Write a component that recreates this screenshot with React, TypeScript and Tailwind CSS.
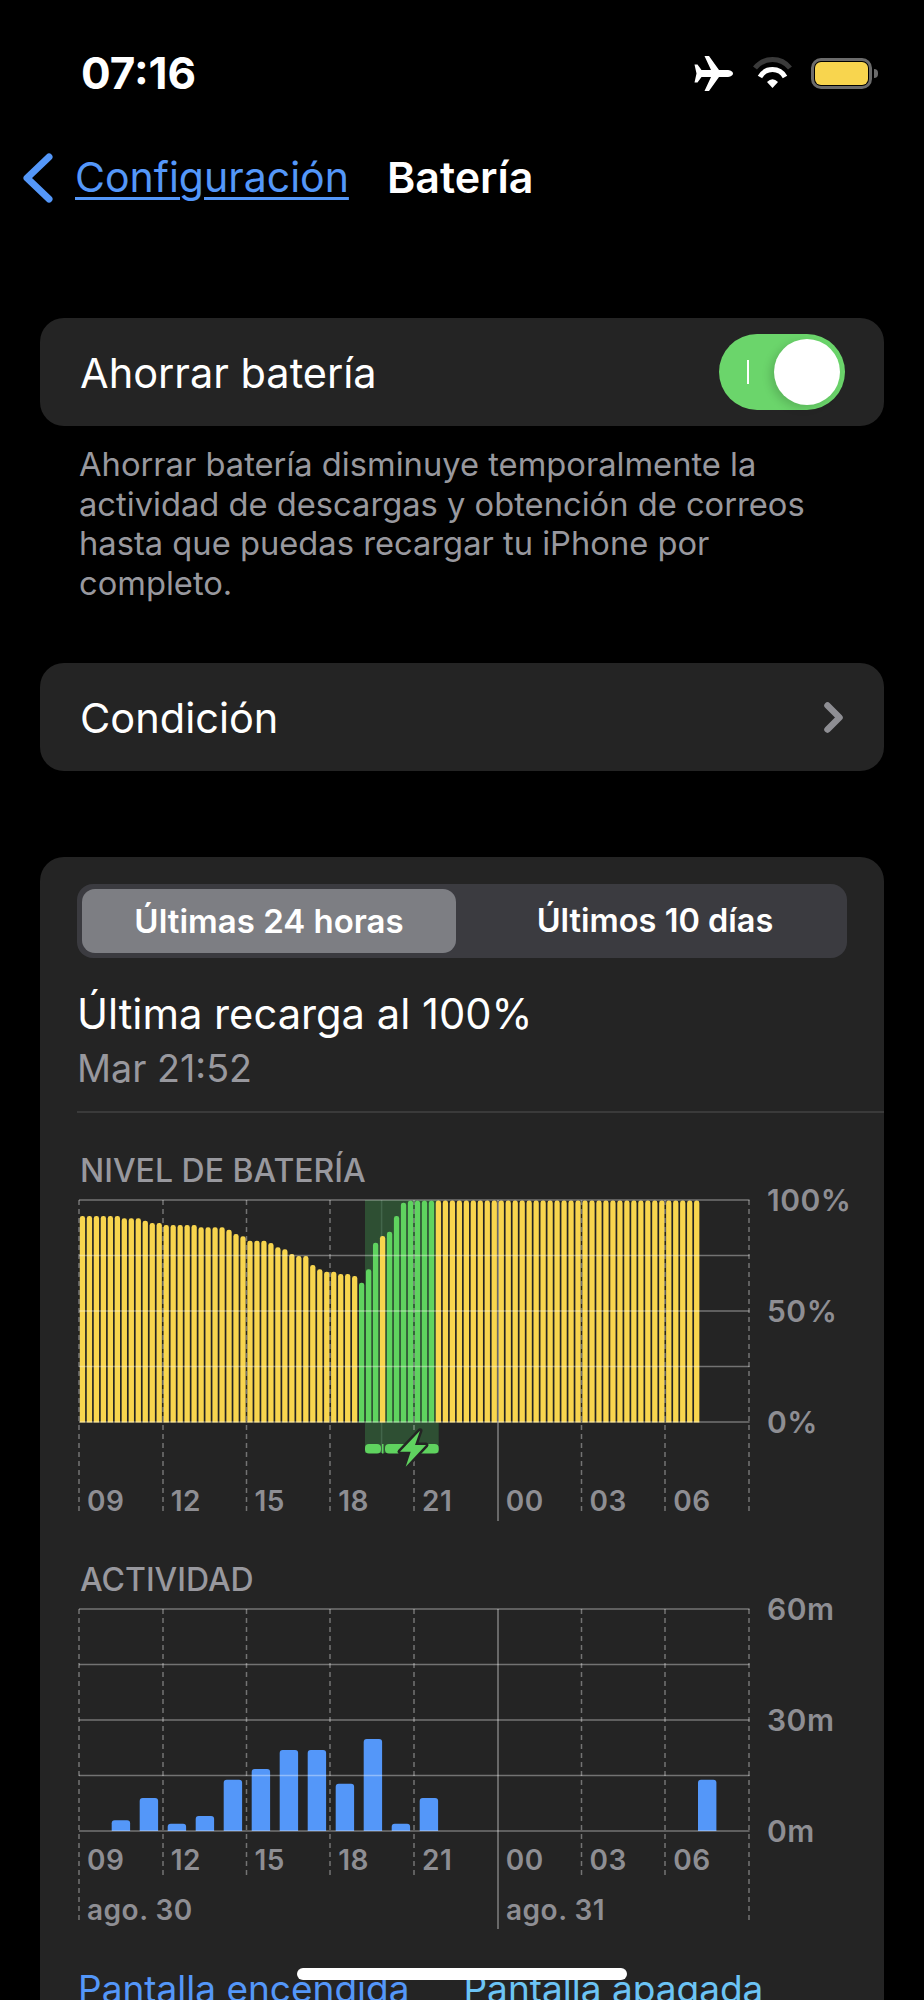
import React from "react";

const X0 = 78;
const Y0 = 1199;

// top edge of each 15 minute bar, in page pixels
const levelTops = [
  108, 108, 108, 108, 108, 108, 115, 115, 115, 122, 129, 129, 135, 135, 135, 135, 135, 142, 142, 142,
  142, 149, 162, 169, 182, 182, 182, 189, 202, 208, 222, 228, 228, 255, 268, 275, 275, 282, 282, 288,
  308, 268, 188, 168, 155, 108, 68, 62, 62, 62, 62,
].map((t) => 1180 + t / 3);

const greenBars = [40, 41, 42, 44, 45, 46, 47, 48, 49, 50];

const activity = [
  { x: 111.7, top: 1819.3 },
  { x: 139.7, top: 1797 },
  { x: 167.7, top: 1822.7 },
  { x: 195.7, top: 1815 },
  { x: 223.7, top: 1778.7 },
  { x: 251.7, top: 1768 },
  { x: 279.7, top: 1749 },
  { x: 307.7, top: 1749 },
  { x: 335.7, top: 1782.7 },
  { x: 363.7, top: 1738 },
  { x: 391.7, top: 1822.7 },
  { x: 419.7, top: 1797 },
  { x: 698, top: 1778.7 },
];

const hours = ["09", "12", "15", "18", "21", "00", "03", "06"];
const vLines = [79, 163, 246.5, 330, 414, 498, 581.5, 665, 749];

function topRounded(x: number, top: number, w: number, bottom: number, r: number) {
  return `M${x} ${bottom}V${top + r}Q${x} ${top} ${x + r} ${top}H${x + w - r}Q${x + w} ${top} ${x + w} ${top + r}V${bottom}Z`;
}

function Grid({ top, bottoms, solidEnd }: { top: number; bottoms: number[]; solidEnd: number }) {
  const rows = [0, 1, 2, 3, 4].map((i) => top + i * 55.5);
  return (
    <g fill="none" stroke="#fff" strokeOpacity="0.36" strokeWidth="1.5">
      {rows.map((y) => (
        <line key={y} x1={79 - X0} x2={749.5 - X0} y1={y - top + 1} y2={y - top + 1} />
      ))}
      {vLines.map((x, i) =>
        i === 5 ? (
          <line key={x} x1={x - X0} x2={x - X0} y1={1} y2={solidEnd} strokeOpacity="0.42" />
        ) : (
          <line key={x} x1={x - X0} x2={x - X0} y1={1} y2={bottoms[i]} strokeDasharray="5 4" />
        ),
      )}
    </g>
  );
}

function BatteryPlot() {
  const base = 1422.5;
  return (
    <svg width="672" height="323" className="block">
      <rect x={365 - X0} y={1} width="73.7" height={1453 - Y0 - 1} fill="#2e4f33" />
      <line x1={381.6 - X0} x2={381.6 - X0} y1={1} y2={1453 - Y0} stroke="#42664a" strokeWidth="1.5" />
      {Array.from({ length: 89 }).map((_, i) => {
        const top = i < levelTops.length ? levelTops[i] : 1200.6;
        const x = 79.8 + i * 6.98;
        return (
          <path
            key={i}
            d={topRounded(x - X0, top - Y0, 5.3, base - Y0, 2.4)}
            fill={greenBars.includes(i) ? "#5fd35f" : "#f8d54e"}
          />
        );
      })}
      <Grid top={Y0} bottoms={[316, 316, 316, 316, 316, 0, 316, 316, 316]} solidEnd={322} />
      <rect x={365 - X0} y={1444 - Y0} width="16" height="9.5" rx="4" fill="#5fd35f" />
      <rect x={382 - X0} y={1444 - Y0} width="1.5" height="9.5" fill="#5fd35f" />
      <rect x={385 - X0} y={1444 - Y0} width="53.7" height="9.5" rx="4" fill="#5fd35f" />
      <path
        d={`M${420 - X0} ${1430.7 - Y0}L${400 - X0} ${1451.7 - Y0}H${410.7 - X0}L${405.7 - X0} ${1466.7 - Y0}L${426 - X0} ${1445 - Y0}H${415 - X0}Z`}
        fill="#5fd35f"
        stroke="#242424"
        strokeWidth="5"
        strokeLinejoin="round"
        paintOrder="stroke"
      />
    </svg>
  );
}

function ActivityPlot() {
  const top = 1607;
  const base = 1830;
  return (
    <svg width="672" height="322" className="block">
      {activity.map((b) => (
        <path key={b.x} d={topRounded(b.x - X0, b.top - top, 18.4, base - top, 3)} fill="#5497f9" />
      ))}
      <Grid top={top} bottoms={[316, 268, 268, 268, 268, 0, 268, 268, 316]} solidEnd={321} />
    </svg>
  );
}

function Chart({
  title,
  plot,
  ticks,
  dates,
  lift,
}: {
  title: string;
  plot: React.ReactNode;
  ticks: string[];
  dates?: boolean;
  lift: string;
}) {
  return (
    <div>
      <div className="pl-[2px] text-[32px] leading-[36px] font-medium text-[#98989e]">{title}</div>
      <div className="mt-[10px] flex">
        <div className="w-[672px] h-[322px] text-[28px] leading-[36px] font-semibold tracking-[0.5px] text-[#8e8e93]">
          {plot}
          <div className={`flex pl-[1px] ${lift}`}>
            {hours.map((h) => (
              <div key={h} className="w-[83.75px] pl-[8px]">
                {h}
              </div>
            ))}
          </div>
          {dates && (
            <div className="mt-[14px] flex pl-[1px]">
              <div className="w-[419px] pl-[8px]">ago. 30</div>
              <div className="pl-[8px]">ago. 31</div>
            </div>
          )}
        </div>
        <div className="ml-[17px] -mt-[17px] flex h-[258px] flex-col justify-between text-[30px] leading-[36px] font-semibold tracking-[0.5px] text-[#8e8e93]">
          {ticks.map((t) => (
            <div key={t}>{t}</div>
          ))}
        </div>
      </div>
    </div>
  );
}

function StatusIcons() {
  return (
    <div className="flex items-center">
      <svg width="39" height="35" viewBox="0 0 39 35" fill="#fff">
        <path d="M39 17.5C39 15.5 36 14 33 14H25L15 0H10.5L17 14H7.5L3.5 8.5H.5L2.5 17.5L.5 26.5H3.5L7.5 21H17L10.5 35H15L25 21H33C36 21 39 19.5 39 17.5Z" />
      </svg>
      <svg width="41" height="32" viewBox="0 0 41 32" fill="none" className="ml-[19px]">
        <path d="M3 11A22.3 22.3 0 0 1 38 11" stroke="#3a3a3a" strokeWidth="5" />
        <path d="M8 20A14.2 14.2 0 0 1 33 20" stroke="#fff" strokeWidth="5" />
        <path d="M15 25Q20.5 19.5 26 25L20.5 31Z" fill="#fff" />
      </svg>
      <div className="ml-[18px] flex items-center">
        <div className="h-[31px] w-[61px] rounded-[10px] border-[3px] border-[#6b6b6b] p-px">
          <div className="h-full w-full rounded-[6px] bg-[#f8d54e]" />
        </div>
        <div className="ml-[2px] h-[9px] w-[4px] rounded-r-full bg-[#6b6b6b]" />
      </div>
    </div>
  );
}

export default function App() {
  return (
    <div className="relative h-[2000px] w-[924px] overflow-hidden bg-black text-white [font-family:Inter,sans-serif]">
      <div className="flex h-[42px] mt-[52px] items-center justify-between pl-[81px] pr-[46px]">
        <span className="text-[44px] font-bold">07:16</span>
        <StatusIcons />
      </div>

      <div className="mt-[58px] flex h-[50px] items-center pl-[23px]">
        <svg width="30" height="50" viewBox="0 0 30 50" fill="none" className="mt-[2px]">
          <path d="M26 4L4 25L26 46" stroke="#5497f9" strokeWidth="7" strokeLinecap="round" strokeLinejoin="round" />
        </svg>
        <span className="ml-[22px] text-[41px] leading-[50px] text-[#5497f9] underline decoration-[3px] underline-offset-[5px]">
          Configuración
        </span>
        <span className="ml-[38px] text-[43px] leading-[50px] font-semibold">Batería</span>
      </div>

      <div className="mx-[40px] mt-[116px] flex h-[108px] items-center justify-between rounded-[24px] bg-[#242424] pl-[40px] pr-[39px]">
        <span className="pt-[3px] text-[41.5px]">Ahorrar batería</span>
        <div className="flex h-[76px] w-[126px] items-center justify-between rounded-full bg-[#6bd56b] pl-[28px] pr-[5px]">
          <div className="h-[24px] w-[2px] bg-white" />
          <div className="h-[66px] w-[66px] rounded-full bg-white shadow-[-4px_3px_8px_rgba(0,0,0,0.15)]" />
        </div>
      </div>

      <p className="mt-[19px] pl-[79px] pr-[40px] text-[32.7px] leading-[39.5px] text-[#98989e]">
        Ahorrar batería disminuye temporalmente la
        <br />
        actividad de descargas y obtención de correos
        <br />
        hasta que puedas recargar tu iPhone por
        <br />
        completo.
      </p>

      <div className="mx-[40px] mt-[60px] flex h-[108px] items-center justify-between rounded-[24px] bg-[#242424] pl-[40px] pr-[41px]">
        <span className="pt-[3px] text-[41.5px]">Condición</span>
        <svg width="19" height="31" viewBox="0 0 19 31" fill="none">
          <path d="M3.5 3.5L15.5 15.5L3.5 27.5" stroke="#8e8e93" strokeWidth="6.5" strokeLinecap="round" strokeLinejoin="round" />
        </svg>
      </div>

      <div className="mx-[40px] mt-[86px] h-[1200px] rounded-t-[24px] bg-[#242424] pt-[27px]">
        <div className="ml-[37px] flex h-[74px] w-[770px] rounded-[16px] bg-[#3b3b40] p-[5px] text-[32.5px] font-semibold">
          <div className="flex w-[374px] items-center justify-center rounded-[13px] bg-[#7d7e83] pt-[1px] text-[33px]">Últimas 24 horas</div>
          <div className="flex flex-1 items-center justify-center pl-[12px] pt-[1px]">Últimos 10 días</div>
        </div>

        <div className="ml-[37px] mt-[33px] text-[41.7px] leading-[46px]">Última recarga al 100%</div>
        <div className="ml-[37px] mt-[10px] text-[37.7px] leading-[42px] text-[#98989e]">Mar 21:52</div>
        <div className="ml-[37px] mt-[22px] h-[2px] bg-[#3a3a3a]" />

        <div className="ml-[38px] mt-[40px]">
          <Chart title="NIVEL DE BATERÍA" plot={<BatteryPlot />} ticks={["100%", "50%", "0%"]} lift="-mt-[39px]" />
        </div>
        <div className="ml-[38px] mt-[41px]">
          <Chart title="ACTIVIDAD" plot={<ActivityPlot />} ticks={["60m", "30m", "0m"]} lift="-mt-[88px]" dates />
        </div>
      </div>

      <div className="absolute left-[78px] top-[1966px] flex text-[37px] leading-[46px]">
        <span className="text-[#5497f9]">Pantalla encendida</span>
        <span className="ml-[54px] text-[#6cc4f5]">Pantalla apagada</span>
      </div>
      <div className="absolute left-[297px] top-[1968px] h-[12px] w-[330px] rounded-full bg-white" />
    </div>
  );
}
